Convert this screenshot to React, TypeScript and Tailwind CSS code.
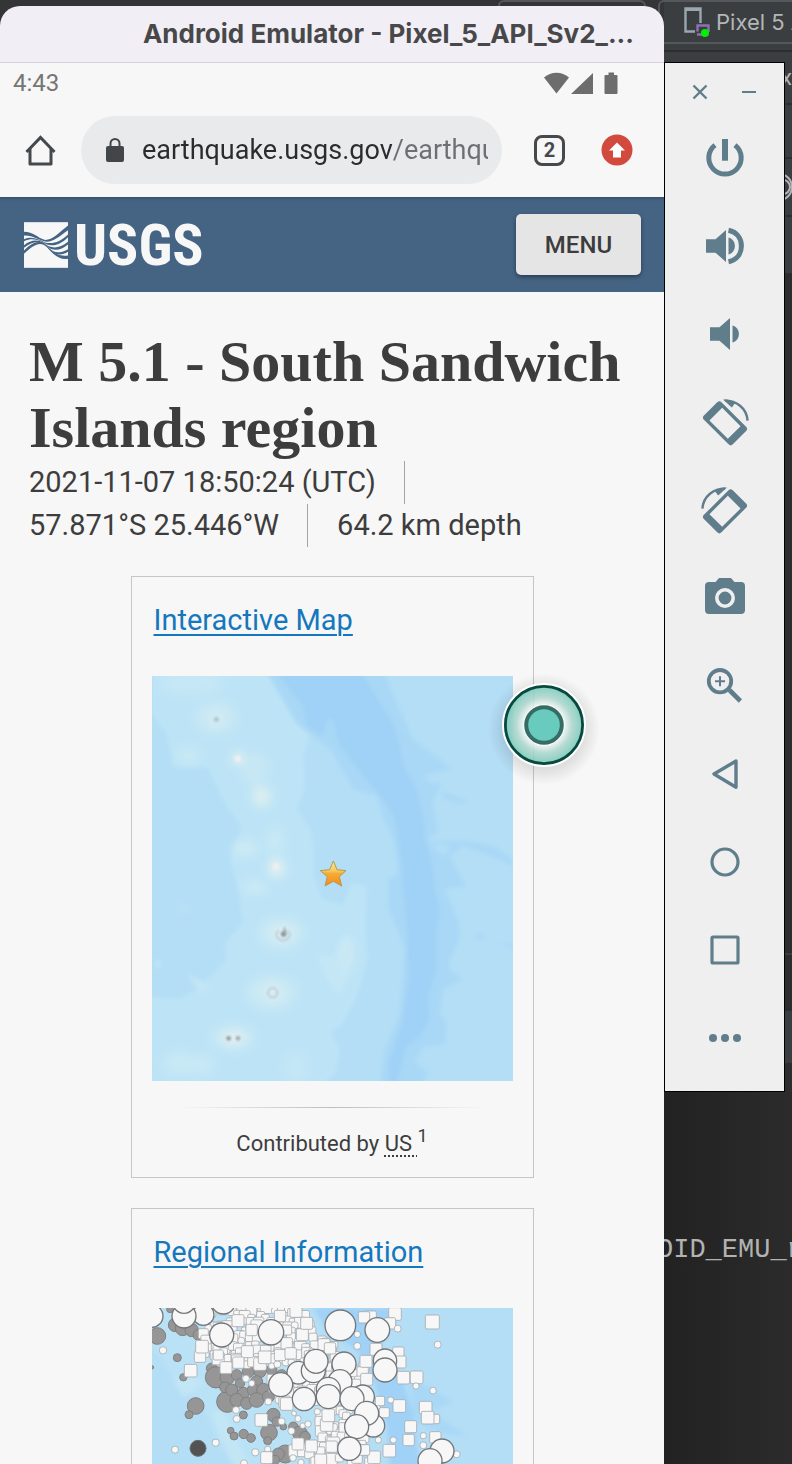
import type { ReactNode } from "react";

type Point = [number, number];
type Dot = [number, number, number];

const slate = "#607d8b";

function ToolIcon({ children }: { children: ReactNode }) {
  return (
    <svg viewBox="0 0 48 48" className="size-12" fill={slate} stroke="none" aria-hidden="true">
      {children}
    </svg>
  );
}

const phoneOutline =
  "M-17.4 -12.4 H17.4 A3 3 0 0 1 20.4 -9.4 V9.4 A3 3 0 0 1 17.4 12.4 H-17.4 A3 3 0 0 1 -20.4 9.4 V-9.4 A3 3 0 0 1 -17.4 -12.4 Z M-13 -9 V9 H13 V-9 Z";

function RotateGlyph() {
  return (
    <>
      <path transform="translate(24 25.3) rotate(45)" fillRule="evenodd" d={phoneOutline} />
      <path d="M24 2.6 C35 2.6 45.6 9.5 46.6 22.7" fill="none" stroke={slate} strokeWidth="2.4" />
      <path d="M22 1.5 L30.8 9.6 L34.5 4.6 L26 1.5 Z" />
    </>
  );
}

const tools: { label: string; glyph: ReactNode }[] = [
  {
    label: "Power",
    glyph: (
      <>
        <path d="M21 5 H27 V26.7 H21 Z" />
        <path d="M14 11.1 A16.2 16.2 0 1 0 34 11.1" fill="none" stroke={slate} strokeWidth="5" />
      </>
    ),
  },
  {
    label: "Volume up",
    glyph: (
      <>
        <path d="M5 17.3 H14.5 L25 8 V40 L14.5 30.7 H5 Z" />
        <path d="M27.5 15.5 C36 18 36 30 27.5 32.5 Z" />
        <path d="M27.5 8.3 C36 10 40.4 16.5 40.4 24 S36 38 27.5 39.7" fill="none" stroke={slate} strokeWidth="5" />
      </>
    ),
  },
  {
    label: "Volume down",
    glyph: (
      <>
        <path d="M9 17.3 H18.5 L29 8 V40 L18.5 30.7 H9 Z" />
        <path d="M31.5 15.5 C40 18 40 30 31.5 32.5 Z" />
      </>
    ),
  },
  { label: "Rotate left", glyph: <RotateGlyph /> },
  {
    label: "Rotate right",
    glyph: (
      <g transform="translate(48 0) scale(-1 1)">
        <RotateGlyph />
      </g>
    ),
  },
  {
    label: "Take screenshot",
    glyph: (
      <>
        <path d="M8 8 H14.5 L18 4 H30 L33.5 8 H40 A4 4 0 0 1 44 12 V36 A4 4 0 0 1 40 40 H8 A4 4 0 0 1 4 36 V12 A4 4 0 0 1 8 8 Z" />
        <circle cx="24" cy="24" r="8.2" fill="none" stroke="#efefef" strokeWidth="3.6" />
      </>
    ),
  },
  {
    label: "Zoom",
    glyph: (
      <g fill="none" stroke={slate}>
        <circle cx="19" cy="19.2" r="11.2" strokeWidth="3.8" />
        <path d="M14 19.2 H24 M19 14.2 V24.2" strokeWidth="2" />
        <path d="M28.4 28 L39.4 39" strokeWidth="4.6" />
      </g>
    ),
  },
  {
    label: "Back",
    glyph: <path d="M35 11 L13 24 L35 37.2 Z" fill="none" stroke={slate} strokeWidth="3.4" strokeLinejoin="round" />,
  },
  { label: "Home", glyph: <circle cx="24" cy="24" r="13" fill="none" stroke={slate} strokeWidth="3.2" /> },
  {
    label: "Overview",
    glyph: <rect x="11" y="11" width="26" height="26" rx="1" fill="none" stroke={slate} strokeWidth="3.2" />,
  },
  {
    label: "More",
    glyph: (
      <>
        <circle cx="12" cy="24" r="4" />
        <circle cx="24" cy="24" r="4" />
        <circle cx="36" cy="24" r="4" />
      </>
    ),
  },
];

function UsgsMark() {
  return (
    <svg viewBox="27 37 132 137" className="h-[46px] w-[44px]" aria-hidden="true">
      <rect x="27" y="37" width="132" height="137" fill="#f7f7f7" />
      <g fill="#456484">
        <path d="M27 66 C55 66 68 84 88 90 C112 92 130 70 159 47 V61 C132 80 116 95 95 96 C72 92 55 76 27 77 Z" />
        <path d="M27 88 C52 78 70 88 88 97 C110 104 135 98 159 74 V82 C136 105 114 110 96 104 C74 92 56 82 27 94 Z" />
        <path d="M27 106 C48 90 66 88 86 99 C106 118 132 118 159 96 V104 C136 124 112 124 96 109 C76 94 56 92 27 114 Z" />
        <path d="M27 122 C48 102 66 89 88 102 C106 118 118 140 159 118 V126 C130 144 112 128 97 113 C76 94 60 102 27 132 Z" />
        <path d="M88 103 C108 116 120 142 159 137 V147 C124 152 108 122 88 103 Z" />
      </g>
    </svg>
  );
}

const shallows: { at: [number, number, number, number]; fill: string }[] = [
  { at: [258, 175, 60, 48], fill: "#c9e8f4" },
  { at: [260, 180, 20, 22], fill: "#d6ecf2" },
  { at: [175, 288, 36, 24], fill: "#c8e8f4" },
  { at: [325, 298, 20, 22], fill: "#dceef2" },
  { at: [375, 330, 36, 50], fill: "#c7e7f4" },
  { at: [395, 412, 30, 32], fill: "#d8edf0" },
  { at: [345, 568, 38, 24], fill: "#cdeaf4" },
  { at: [435, 545, 26, 40], fill: "#c8e8f4" },
  { at: [440, 625, 28, 32], fill: "#dbeef2" },
  { at: [375, 684, 38, 22], fill: "#cae9f4" },
  { at: [455, 822, 66, 46], fill: "#cbe9f4" },
  { at: [455, 822, 24, 18], fill: "#e3eff1" },
  { at: [425, 1000, 72, 50], fill: "#cae9f4" },
  { at: [428, 1000, 24, 22], fill: "#dceef2" },
  { at: [310, 1135, 64, 38], fill: "#cae9f4" },
  { at: [310, 1136, 30, 16], fill: "#e6f0f1" },
  { at: [150, 1212, 50, 34], fill: "#c8e8f5" },
  { at: [215, 1218, 36, 30], fill: "#c8e8f5" },
  { at: [495, 1225, 34, 44], fill: "#c4e6f5" },
  { at: [160, 747, 16, 12], fill: "#bce2f5" },
  { at: [185, 70, 90, 36], fill: "#c6e7f5" },
];

function InteractiveMap() {
  return (
    <svg viewBox="66 50 1083 1216" className="block w-full" role="img" aria-label="Epicenter map">
      <defs>
        <filter id="soft" x="-10%" y="-10%" width="120%" height="120%">
          <feGaussianBlur stdDeviation="6" />
        </filter>
        <filter id="softer" x="-60%" y="-60%" width="220%" height="220%">
          <feGaussianBlur stdDeviation="13" />
        </filter>
        <filter id="softMark" x="-60%" y="-60%" width="220%" height="220%">
          <feGaussianBlur stdDeviation="2.5" />
        </filter>
        <linearGradient id="star" x1="0" y1="0" x2="0" y2="1">
          <stop offset="0" stopColor="#fbe9a4" />
          <stop offset="0.4" stopColor="#f7c85c" />
          <stop offset="0.5" stopColor="#f6ab35" />
          <stop offset="1" stopColor="#f58a1f" />
        </linearGradient>
      </defs>
      <rect x="66" y="50" width="1083" height="1216" fill="#b4def6" />
      <g filter="url(#soft)">
        <path
          fill="#bde4f6"
          d="M66 30 H400 L470 130 L540 215 L520 290 L525 380 L500 450 L540 510 L552 570 L548 640 L575 720 L640 738 L665 670 L710 680 L705 800 L712 900 L680 1010 L640 1090 L600 1120 L630 1170 L615 1240 L560 1290 H40 V1010 L150 1020 L210 985 L290 900 L285 850 L340 790 L325 690 L300 600 L335 500 L290 440 L255 370 L235 325 L130 325 L110 220 L66 165 Z"
        />
        <path
          fill="#a9d8f6"
          d="M405 30 H760 L800 130 L850 240 L968 330 L880 350 L900 370 L935 370 L910 430 L925 520 L890 545 L1020 545 L1090 560 L1149 600 V620 L1080 590 L1000 560 L960 590 L1010 680 L945 690 L985 780 L990 840 L960 900 L962 935 L1000 960 L940 990 L930 1060 L950 1090 L945 1155 L880 1165 L855 1205 L895 1240 L870 1290 H750 L765 1170 L810 1060 L825 870 L775 750 L775 660 L805 640 L790 540 L760 480 L740 410 L670 390 L600 270 L500 195 Z"
        />
        <path
          fill="#a0d1f6"
          d="M430 30 H690 L725 90 L775 170 L800 220 L825 330 L860 390 L880 480 L885 540 L905 600 L915 700 L930 745 L918 830 L920 930 L895 1010 L898 1080 L870 1130 L830 1160 L795 1290 H780 L775 1210 L815 1100 L835 960 L832 830 L820 700 L812 590 L795 480 L760 420 L700 350 L625 250 L610 180 L590 180 L580 230 L530 200 L520 140 Z"
        />
        <path fill="#b4def6" d="M900 555 L960 560 L940 590 Z M1060 540 L1149 540 V548 L1080 552 Z" />
        <path fill="#a9d8f6" d="M930 395 L1015 425 L1000 435 L945 420 Z M1035 825 H1065 V838 H1035 Z M1105 845 L1149 860 V875 Z" />
        <path fill="#c5e7f5" d="M640 830 C690 830 665 950 625 1000 C600 980 570 900 560 880 C610 920 620 880 640 830 Z" />
        <path fill="#c3e6f5" d="M170 945 L240 975 L215 1005 Z M75 900 L95 915 L80 930 Z" />
      </g>
      <g filter="url(#softer)">
        <ellipse cx="653" cy="885" rx="16" ry="46" fill="#cbe9f4" />
        {shallows.map(({ at: [x, y, rx, ry], fill }) => (
          <ellipse key={`${x}-${y}-${rx}`} cx={x} cy={y} rx={rx} ry={ry} fill={fill} />
        ))}
      </g>
      <g filter="url(#softMark)">
        <g fill="none" stroke="#b4c6cd" strokeWidth="6" opacity="0.8">
          <circle cx="428" cy="1000" r="14" />
          <path d="M446 812 A20 18 0 1 0 475 814" />
        </g>
        <circle cx="461" cy="824" r="8" fill="#7f8c90" />
        <path d="M463 800 L471 822 L458 826 Z" fill="#9aa6aa" />
        <circle cx="259" cy="180" r="8" fill="#b3c9d0" />
        <circle cx="296" cy="1137" r="7" fill="#929da0" />
        <circle cx="324" cy="1137" r="7" fill="#a2adb0" />
        <circle cx="323" cy="298" r="9" fill="#f1efec" />
        <circle cx="438" cy="622" r="10" fill="#ecefed" />
      </g>
      <path
        d="M610 605 L621 631 L648 634 L628 652 L635 680 L610 666 L585 680 L592 652 L571 634 L599 631 Z"
        fill="url(#star)"
        stroke="#b59a4b"
        strokeWidth="3"
        strokeLinejoin="round"
      />
    </svg>
  );
}

const grayQuakes: Dot[] = [
  [36, 40, 22], [90, 28, 10], [52, 108, 25], [105, 75, 20], [128, 85, 22], [155, 90, 20], [175, 105, 16], [190, 118, 12],
  [112, 173, 12], [130, 232, 11], [36, 202, 5], [215, 205, 16], [228, 232, 32], [262, 232, 22], [262, 305, 32], [255, 262, 16],
  [290, 225, 16], [325, 215, 18], [360, 215, 18], [395, 210, 16], [425, 225, 16], [350, 245, 18], [300, 250, 14],
  [275, 270, 18], [310, 280, 18], [340, 270, 18], [370, 270, 20], [290, 300, 20], [320, 310, 18], [350, 300, 22],
  [385, 290, 18], [310, 345, 12], [167, 318, 25], [147, 344, 12], [272, 392, 10], [282, 408, 12], [311, 402, 14],
  [333, 414, 13], [387, 398, 25], [383, 422, 12], [400, 345, 20], [410, 365, 14], [430, 380, 10], [460, 380, 14],
  [480, 400, 22], [495, 410, 16], [436, 462, 27], [415, 462, 18], [405, 480, 14],
];

const bigQuakes: Dot[] = [
  [35, 48, 34], [250, 6, 36], [190, 44, 32], [132, 48, 36], [132, 6, 34], [245, 105, 36], [393, 97, 38], [601, 76, 46],
  [712, 90, 37], [735, 182, 35], [735, 210, 36], [475, 218, 34], [520, 212, 36], [612, 192, 36], [528, 184, 36],
  [422, 254, 36], [600, 245, 36], [565, 268, 36], [565, 290, 36], [492, 297, 35], [668, 290, 35], [636, 296, 36],
  [700, 377, 34], [680, 340, 36], [650, 380, 36], [628, 446, 35], [906, 453, 36], [870, 482, 36],
];

const namedSquares: Dot[] = [
  [765, 42, 38], [877, 66, 42], [893, 134, 20], [690, 52, 38], [672, 52, 34], [750, 70, 34], [773, 86, 20],
  [652, 103, 18], [652, 138, 20], [708, 148, 36], [678, 184, 36], [775, 158, 34], [780, 186, 36], [810, 233, 24],
  [790, 233, 38], [830, 232, 38], [828, 258, 18], [879, 272, 19], [778, 318, 38], [752, 300, 18], [720, 303, 28],
  [733, 338, 30], [857, 323, 38], [885, 357, 28], [863, 353, 38], [812, 380, 36], [806, 420, 34], [850, 407, 18],
  [850, 436, 20], [886, 412, 34], [950, 463, 20], [715, 420, 18], [760, 420, 18], [748, 452, 38], [702, 472, 38],
  [673, 450, 32], [180, 170, 34], [186, 140, 38], [152, 212, 38], [69, 151, 21], [294, 62, 36], [335, 90, 34],
  [322, 155, 36], [374, 172, 38], [258, 203, 36], [295, 188, 34], [487, 104, 36], [440, 130, 34], [440, 90, 30],
  [318, 236, 20], [335, 250, 18], [288, 330, 20], [290, 357, 20], [364, 360, 38], [227, 428, 21], [105, 449, 20],
  [346, 457, 21], [383, 448, 18], [380, 473, 36], [312, 490, 20], [474, 432, 36], [514, 438, 36], [542, 480, 36],
  [575, 440, 34], [440, 312, 38], [385, 305, 20], [425, 364, 20], [454, 393, 20], [474, 356, 18], [488, 377, 16],
  [560, 375, 38], [565, 346, 38], [504, 372, 18], [532, 335, 18], [462, 340, 14], [590, 200, 28], [680, 238, 36],
  [500, 70, 36], [420, 48, 34], [468, 34, 36], [235, 165, 30], [420, 165, 34], [452, 160, 34], [570, 145, 34],
];

const bands: [number, number, number][] = [
  [30, 215, 500], [48, 290, 500], [66, 220, 510], [84, 210, 520], [102, 200, 530], [120, 200, 570], [138, 210, 585],
  [156, 190, 590], [174, 220, 600], [190, 290, 640], [206, 450, 680], [222, 450, 680], [244, 400, 680], [264, 400, 680],
  [284, 410, 690], [306, 420, 705], [326, 550, 730], [350, 550, 630], [372, 550, 630], [394, 550, 630],
  [414, 540, 680], [436, 480, 690], [458, 470, 680], [480, 460, 690],
];

function hash(n: number) {
  const v = Math.sin(n * 127.1) * 43758.5453;
  return v - Math.floor(v);
}

function scatter(): Dot[] {
  return bands.flatMap(([y, from, to], row) => {
    const marks: Dot[] = [];
    for (let x = from, i = 0; x <= to; x += 24, i += 1) {
      const seed = row * 41 + i * 3 + 1;
      marks.push([
        Math.round(x + hash(seed) * 24 - 12),
        Math.round(y + hash(seed + 1) * 18 - 9),
        18 + Math.round(hash(seed + 2) * 20),
      ]);
    }
    return marks;
  });
}

const squares: Dot[] = [...scatter(), ...namedSquares];

function RegionalMap() {
  return (
    <svg viewBox="36 24 1083 1216" className="block w-full" role="img" aria-label="Regional seismicity map">
      <rect x="36" y="24" width="1083" height="1216" fill="#b4def6" />
      <g filter="url(#soft)">
        <path fill="#bae2f6" d="M36 24 H500 L560 150 L640 300 L660 500 H300 L240 440 L190 320 L110 260 L70 180 L36 150 Z" />
        <path fill="#c3e6f5" d="M100 240 L150 230 L190 250 L130 290 Z M215 340 L250 330 L300 440 L330 500 H280 Z" />
        <path fill="#a0d1f6" d="M520 24 H770 L740 80 L720 150 L790 250 L820 330 L840 500 H750 L740 380 L700 240 L650 150 L560 90 Z" />
        <path fill="#a9d8f6" d="M800 220 L940 305 L890 330 L850 320 L985 410 L900 400 L830 370 Z" />
      </g>
      <g fill="#969696" stroke="#808080" strokeWidth="3">
        {grayQuakes.map(([x, y, r]) => (
          <circle key={`${x}-${y}`} cx={x} cy={y} r={r} />
        ))}
      </g>
      <circle cx="174" cy="445" r="24" fill="#525252" stroke="#6b6b6b" strokeWidth="3" />
      <g fill="#f7f7f7" stroke="#a9adb0" strokeWidth="2.6">
        {squares.map(([x, y, s], i) => (
          <rect key={i} x={x - s / 2} y={y - s / 2} width={s} height={s} rx={s < 22 ? s / 2.4 : 5} />
        ))}
      </g>
      <g fill="#f7f7f7" stroke="#74777a" strokeWidth="4">
        {bigQuakes.map(([x, y, r]) => (
          <circle key={`${x}-${y}`} cx={x} cy={y} r={r} />
        ))}
      </g>
    </svg>
  );
}

function TouchMarker() {
  const center: Point = [60, 60];
  return (
    <svg
      viewBox="0 0 120 120"
      className="pointer-events-none absolute top-[88px] -right-[71px] size-[120px]"
      aria-hidden="true"
    >
      <defs>
        <radialGradient id="ring">
          <stop offset="0.5" stopColor="#ffffff" stopOpacity="0.75" />
          <stop offset="0.72" stopColor="#a8d8cd" stopOpacity="0.75" />
          <stop offset="1" stopColor="#70c9b8" stopOpacity="0.8" />
        </radialGradient>
        <radialGradient id="halo">
          <stop offset="0.66" stopColor="#000000" stopOpacity="0.12" />
          <stop offset="1" stopColor="#000000" stopOpacity="0" />
        </radialGradient>
      </defs>
      <circle cx="60" cy="64" r="56" fill="url(#halo)" />
      <circle cx={center[0]} cy={center[1]} r="41" fill="#e8eeec" fillOpacity="0.4" stroke="#ffffff" strokeWidth="2" />
      <circle cx={center[0]} cy={center[1]} r="38.6" fill="url(#ring)" stroke="#06493f" strokeWidth="2.8" />
      <circle cx={center[0]} cy={center[1]} r="20.5" fill="#ffffff" />
      <circle cx={center[0]} cy={center[1]} r="17.8" fill="#68cbbd" stroke="#356c63" strokeWidth="4" />
    </svg>
  );
}

function StatusBar() {
  return (
    <div className="flex h-10 items-center justify-between pr-[46px] pl-[13px] text-[24px] leading-10 text-[#757575]">
      <span>4:43</span>
      <div className="flex items-center" aria-hidden="true">
        <svg viewBox="0 0 74 22" className="h-[22px] w-[74px]" fill="#6d6d6d">
          <path d="M12.5 21.5 L0 5.5 C7 -1 18 -1 25 5.5 Z" />
          <path d="M27 22 L49 1 V22 Z" />
          <path d="M61 3 H64.500 V0.500 H70 V3 H72.500 A1 1 0 0 1 73.500 4 V21 A1 1 0 0 1 72.500 22 H61.500 A1 1 0 0 1 60.500 21 V4 A1 1 0 0 1 61.500 3 Z" />
        </svg>
      </div>
    </div>
  );
}

function BrowserBar() {
  return (
    <div className="flex items-center pt-[13px] pr-[31px] pb-[13px] pl-[25px]">
      <button type="button" aria-label="Home page" className="mr-[25px] shrink-0">
        <svg viewBox="0 0 31 31" className="size-[31px]" fill="none" stroke="#45494c" strokeWidth="3">
          <path d="M1.500 17 L15.500 2.500 L29.500 17" />
          <path d="M5 14 V29 H26 V14" strokeLinejoin="round" />
        </svg>
      </button>
      <div className="flex h-[68px] min-w-0 flex-1 items-center rounded-full bg-[#e9eaec] pr-[14px] pl-[25px]">
        <svg viewBox="0 0 18 24" className="mr-[18px] h-6 w-[18px] shrink-0" aria-hidden="true">
          <rect y="8" width="18" height="16" rx="2" fill="#424649" />
          <path d="M4.500 9 V5.500 A4.500 4.500 0 0 1 13.500 5.500 V9" fill="none" stroke="#424649" strokeWidth="2" />
        </svg>
        <input
          type="text"
          aria-label="Address"
          defaultValue="earthquake.usgs.gov/earthquakes"
          className="h-10 min-w-0 flex-1 bg-[linear-gradient(90deg,#2a2b2d_250px,#6c6f73_250px)] bg-clip-text text-[27px] text-transparent outline-none"
        />
      </div>
      <button
        type="button"
        aria-label="Open tabs"
        className="ml-8 flex size-[31px] shrink-0 items-center justify-center rounded-[8px] border-3 border-[#45494c] text-[20px] leading-6 font-bold text-[#45494c]"
      >
        2
      </button>
      <button type="button" aria-label="Update" className="ml-9 shrink-0">
        <svg viewBox="0 0 32 32" className="size-8">
          <circle cx="16" cy="16" r="15.500" fill="#d14a3d" />
          <path d="M16 8.500 L24 16.500 H20 V23.500 H12 V16.500 H8 Z" fill="#ffffff" />
        </svg>
      </button>
    </div>
  );
}

function Card({ title, children }: { title: string; children: ReactNode }) {
  return (
    <section className="relative mx-auto w-full max-w-[403px] shrink-0 border border-[#c6c6c6] px-5 pt-[21px]">
      <h2 className="mb-[34px] pl-[2px] text-[29px] leading-11">
        <a href="#map" className="text-[#1577bd] underline decoration-2 underline-offset-4">
          {title}
        </a>
      </h2>
      {children}
    </section>
  );
}

function Phone() {
  return (
    <main className="relative z-10 flex h-full min-w-0 flex-1 flex-col">
      <div className="h-[6px] shrink-0 overflow-hidden pr-[18px]">
        <div className="ml-auto h-8 w-[148px] rounded-[6px] border-2 border-[#55585a]" />
      </div>
      <header className="flex h-[57px] shrink-0 items-center justify-end rounded-t-[20px] border-b border-[#d6d3d8] bg-[#f1eff5] pr-[30px]">
        <h1 className="truncate font-[Inter,sans-serif] text-[26px] leading-8 font-bold text-[#48484a]">
          Android Emulator - Pixel_5_API_Sv2_...
        </h1>
      </header>
      <div className="flex min-h-0 flex-1 flex-col overflow-hidden bg-[#f7f7f7]">
        <StatusBar />
        <BrowserBar />
        <div className="flex h-[95px] shrink-0 items-center justify-between bg-[#456484] pr-[23px] pl-6 shadow-[inset_0_4px_4px_-4px_rgba(0,0,0,0.4)]">
          <a href="#home" className="flex items-center gap-[6px]">
            <UsgsMark />
            <span className="font-['Roboto_Condensed','Liberation_Sans_Narrow','Liberation_Sans',sans-serif] text-[58px] leading-[54px] font-bold text-[#f7f7f7]">
              USGS
            </span>
          </a>
          <button
            type="button"
            className="h-[61px] w-[125px] rounded-[5px] bg-[#e5e5e5] text-[24px] font-medium text-[#3c3c3c] shadow-[0_2px_4px_rgba(0,0,0,0.4)]"
          >
            MENU
          </button>
        </div>
        <article className="flex flex-col px-[29px] pt-[37px] text-[#3d3d3d]">
          <h2 className="font-['Liberation_Serif',serif] text-[58px] leading-[66px] font-bold">
            M 5.1 - South Sandwich Islands region
          </h2>
          <ul className="flex flex-wrap text-[29px] leading-[43px]">
            <li className="mr-[29px] border-r border-[#a3a3a3] pr-[28px]">2021-11-07 18:50:24 (UTC)</li>
            <li className="mr-[29px] border-r border-[#a3a3a3] pr-[28px]">57.871°S 25.446°W</li>
            <li>64.2 km depth</li>
          </ul>
          <div className="mt-[29px] flex flex-col gap-[30px]">
            <Card title="Interactive Map">
              <InteractiveMap />
              <div className="mx-7 mt-[26px] h-px bg-linear-to-r from-transparent via-[#bdbdbd] to-transparent" />
              <p className="pt-5 pb-[17px] text-center text-[22px] leading-8">
                Contributed by{" "}
                <abbr title="USGS National Earthquake Information Center" className="underline decoration-dotted underline-offset-4">
                  US&nbsp;
                </abbr>
                <sup className="text-[18px] leading-none">1</sup>
              </p>
              <TouchMarker />
            </Card>
            <Card title="Regional Information">
              <RegionalMap />
            </Card>
          </div>
        </article>
      </div>
    </main>
  );
}

function ToolPanel() {
  return (
    <nav aria-label="Emulator controls" className="w-[121px] shrink-0 border border-black bg-[#efefef] pb-[9px]">
      <div className="flex h-[51px] items-center justify-between px-[26px] pt-[7px]">
        <button type="button" aria-label="Close">
          <svg viewBox="0 0 18 18" className="size-[18px]" fill="none" stroke={slate} strokeWidth="2.4">
            <path d="M2.500 2.500 L15.500 15.500 M15.500 2.500 L2.500 15.500" />
          </svg>
        </button>
        <button type="button" aria-label="Minimize">
          <svg viewBox="0 0 18 18" className="size-[18px]" stroke={slate} strokeWidth="2">
            <path d="M2 9 H16" />
          </svg>
        </button>
      </div>
      {tools.map(({ label, glyph }) => (
        <button key={label} type="button" aria-label={label} className="flex h-[88px] w-full items-center justify-center">
          <ToolIcon>{glyph}</ToolIcon>
        </button>
      ))}
    </nav>
  );
}

function Editor() {
  return (
    <aside className="flex w-32 shrink-0 flex-col">
      <div className="flex h-[62px] shrink-0 flex-col bg-[#3b3e40]">
        <div className="-mr-4 -ml-[6px] flex h-11 items-center gap-[6px] overflow-hidden rounded-[6px] border-2 border-[#55585a] pl-6">
          <svg viewBox="0 0 26 30" className="h-[30px] w-[26px] shrink-0" fill="none" aria-hidden="true">
            <path d="M16.500 16 V1.500 H1.500 V24.500 H11" stroke="#9aa7b0" strokeWidth="2.400" />
            <path d="M1 1 H17 V4 H1 Z" fill="#9aa7b0" />
            <path d="M13.500 24.500 V18.500 H24.500 V25 M13 27.500 H19" stroke="#8f6fb5" strokeWidth="2.400" />
            <circle cx="21" cy="26" r="4" fill="#00f000" />
          </svg>
          <span className="font-[Inter,sans-serif] text-[22px] whitespace-nowrap text-[#b4b6b8]">Pixel 5 A</span>
        </div>
        <div className="mt-[6px] h-[2px] bg-[#2c2e2f]" />
      </div>
      <div className="flex shrink-0 bg-[#2c2d2f]">
        <ToolPanel />
        <div className="flex min-w-0 flex-1 flex-col overflow-hidden text-[#b4b6b8]">
          <div className="h-[43px] border-b-2 border-[#2c2e2f] bg-[#3b3e40] text-[22px] leading-8">
            <span className="-ml-1">x</span>
          </div>
          <div className="h-[54px] border-b-2 border-[#2c2e2f] bg-[#3b3e40]" />
          <div className="flex h-[58px] items-center justify-end border-b-2 border-[#2c2e2f] bg-[#3b3e40]">
            <svg viewBox="0 0 7 28" className="h-7 w-[7px] shrink-0" fill="none" stroke="#b4b6b8" strokeWidth="2" aria-hidden="true">
              <circle cx="-2" cy="14" r="7" />
              <circle cx="-6" cy="14" r="13" />
            </svg>
          </div>
          <div className="h-[58px] border-b-2 border-[#2c2e2f] bg-[#3b3e40]" />
          <div className="mt-[678px] h-[58px] border-t-2 border-[#3b3d3f]" />
          <div className="h-[52px] bg-[#3b3e40]" />
        </div>
      </div>
      <div className="flex-1 overflow-hidden bg-linear-to-r from-[#222222] to-[#2b2b2b] pt-[140px]">
        <code className="-ml-[7px] block font-['Liberation_Mono',monospace] text-[27px] leading-9 whitespace-nowrap text-[#b2b2b2]">
          OID_EMU_r
        </code>
      </div>
    </aside>
  );
}

export default function App() {
  return (
    <div className="flex h-screen overflow-hidden bg-[#333537] font-[Roboto,sans-serif]">
      <Phone />
      <Editor />
    </div>
  );
}
